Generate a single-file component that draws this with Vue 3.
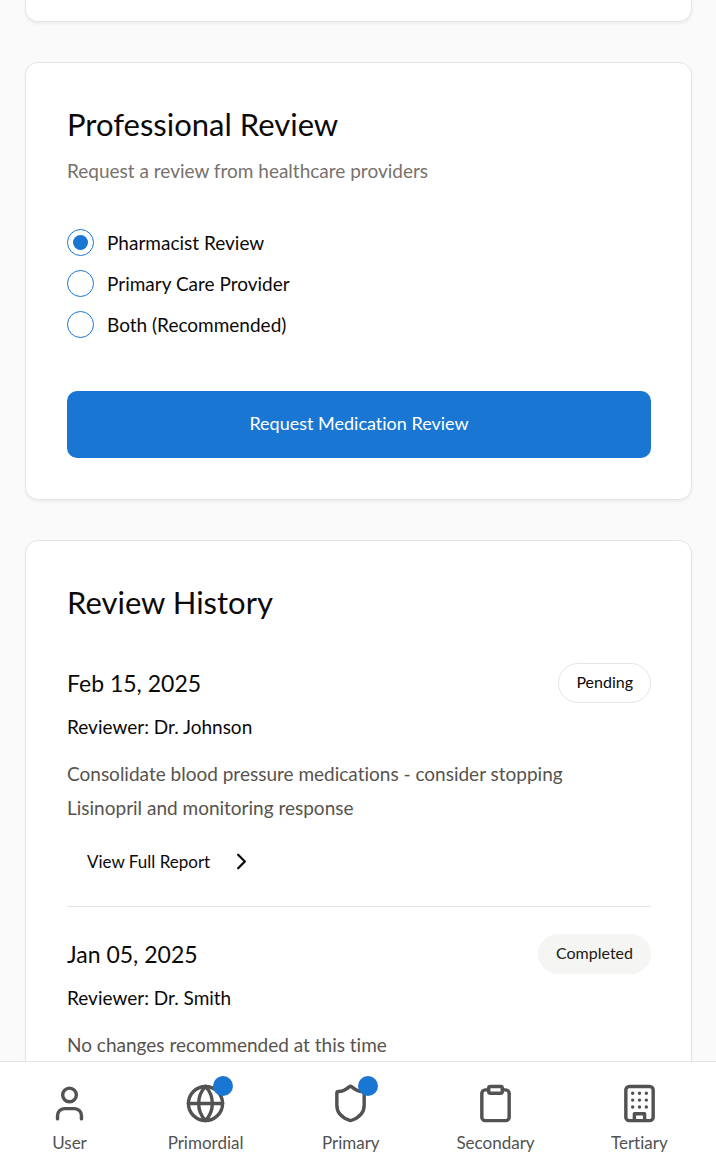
<script setup>
import { ref } from 'vue'

const reviewer = ref('pharmacist')

const options = [
  { value: 'pharmacist', label: 'Pharmacist Review' },
  { value: 'primary', label: 'Primary Care Provider' },
  { value: 'both', label: 'Both (Recommended)' },
]

const history = [
  {
    date: 'Feb 15, 2025',
    status: 'Pending',
    reviewer: 'Dr. Johnson',
    note: 'Consolidate blood pressure medications - consider stopping Lisinopril and monitoring response',
    hasReport: true,
  },
  {
    date: 'Jan 05, 2025',
    status: 'Completed',
    reviewer: 'Dr. Smith',
    note: 'No changes recommended at this time',
    hasReport: false,
  },
]

const tabs = [
  {
    label: 'User',
    paths: ['M19 21v-2a4 4 0 0 0-4-4H9a4 4 0 0 0-4 4v2', 'M8 7a4 4 0 1 0 8 0a4 4 0 1 0-8 0'],
  },
  {
    label: 'Primordial',
    alert: true,
    paths: [
      'M2 12a10 10 0 1 0 20 0a10 10 0 1 0-20 0',
      'M12 2a14.5 14.5 0 0 0 0 20 14.5 14.5 0 0 0 0-20',
      'M2 12h20',
    ],
  },
  {
    label: 'Primary',
    alert: true,
    paths: [
      'M20 13c0 5-3.5 7.5-7.66 8.95a1 1 0 0 1-.67-.01C7.5 20.5 4 18 4 13V6a1 1 0 0 1 1-1c2 0 4.5-1.2 6.24-2.72a1.17 1.17 0 0 1 1.52 0C14.51 3.81 17 5 19 5a1 1 0 0 1 1 1z',
    ],
  },
  {
    label: 'Secondary',
    paths: [
      'M9 2h6a1 1 0 0 1 1 1v2a1 1 0 0 1-1 1H9a1 1 0 0 1-1-1V3a1 1 0 0 1 1-1z',
      'M16 4h2a2 2 0 0 1 2 2v14a2 2 0 0 1-2 2H6a2 2 0 0 1-2-2V6a2 2 0 0 1 2-2h2',
    ],
  },
  {
    label: 'Tertiary',
    paths: [
      'M6 2h12a2 2 0 0 1 2 2v16a2 2 0 0 1-2 2H6a2 2 0 0 1-2-2V4a2 2 0 0 1 2-2z',
      'M9 22v-4h6v4',
      'M8 6h.01M12 6h.01M16 6h.01M8 10h.01M12 10h.01M16 10h.01M8 14h.01M12 14h.01M16 14h.01',
    ],
  },
]
</script>

<template>
  <div class="app">
    <main class="content">
      <section class="card card-tail" aria-hidden="true"></section>

      <section class="card">
        <h2 class="title">Professional Review</h2>
        <p class="subtitle">Request a review from healthcare providers</p>
        <div class="options" role="radiogroup" aria-label="Reviewer">
          <label v-for="o in options" :key="o.value" class="option">
            <input v-model="reviewer" class="radio" type="radio" name="reviewer" :value="o.value" />
            <span>{{ o.label }}</span>
          </label>
        </div>
        <button class="primary" type="button">Request Medication Review</button>
      </section>

      <section class="card">
        <h2 class="title">Review History</h2>
        <div class="history">
          <article v-for="h in history" :key="h.date" class="entry">
            <header class="entry-head">
              <h3 class="date">{{ h.date }}</h3>
              <span class="badge" :class="{ done: h.status === 'Completed' }">{{ h.status }}</span>
            </header>
            <p class="by">Reviewer: {{ h.reviewer }}</p>
            <p class="note">{{ h.note }}</p>
            <button v-if="h.hasReport" class="report" type="button">
              View Full Report
              <svg class="chevron" viewBox="0 0 24 24" aria-hidden="true"><path d="m9 18 6-6-6-6" /></svg>
            </button>
          </article>
        </div>
      </section>
    </main>

    <nav class="tabs" aria-label="Main">
      <a v-for="t in tabs" :key="t.label" class="tab" href="#">
        <span class="tab-icon">
          <svg viewBox="0 0 24 24" aria-hidden="true"><path v-for="d in t.paths" :key="d" :d="d" /></svg>
          <span v-if="t.alert" class="dot"></span>
        </span>
        <span class="tab-label">{{ t.label }}</span>
      </a>
    </nav>
  </div>
</template>

<style>
body {
  background: #fafafa;
}
</style>

<style scoped>
.app {
  display: flex;
  flex-direction: column;
  height: 100vh;
  font-family: Lato, "Liberation Sans", Arial, sans-serif;
  font-size: 19px;
  font-variant-ligatures: none;
  line-height: 34px;
  color: #0c0a09;
}
h2,
h3,
p {
  margin: 0;
  font-weight: 400;
}
button {
  font: inherit;
  color: inherit;
  border: 0;
  background: none;
  cursor: pointer;
}
svg {
  display: block;
  fill: none;
  stroke: currentColor;
  stroke-width: 2;
  stroke-linecap: round;
  stroke-linejoin: round;
}
.content {
  flex: 1;
  min-height: 0;
  overflow: hidden;
  padding: 0 24px 0 25px;
}
.card {
  margin-bottom: 40px;
  padding: 41px 40px 41px 41px;
  background: #fff;
  border: 1px solid #e5e5e5;
  border-radius: 13px;
  box-shadow: 0 2px 3px rgba(0, 0, 0, 0.05);
}
.card-tail {
  padding: 21px 0 0;
  border-top: 0;
  border-radius: 0 0 13px 13px;
}
.title {
  font-size: 31px;
  line-height: 40px;
}
.subtitle {
  margin-top: 10px;
  color: #78716c;
}
.options {
  display: flex;
  flex-direction: column;
  gap: 14px;
  margin: 41px 0 53px;
}
.option {
  display: flex;
  align-items: center;
  gap: 13px;
  line-height: 27px;
}
.radio {
  appearance: none;
  display: grid;
  place-items: center;
  width: 27px;
  height: 27px;
  margin: 0;
  border: 1px solid #1976d2;
  border-radius: 50%;
}
.radio:checked::before {
  content: "";
  width: 15px;
  height: 15px;
  border-radius: 50%;
  background: #1976d2;
}
.primary {
  display: block;
  width: 100%;
  padding: 15px 16px 17px;
  font-size: 18px;
  line-height: 35px;
  color: #fff;
  background: #1976d2;
  border-radius: 10px;
}
.entry {
  padding: 27px 0 21px;
  border-bottom: 1px solid #e5e5e5;
}
.entry:first-child {
  padding-top: 41px;
}
.entry:last-child {
  border-bottom: 0;
}
.entry-head {
  display: flex;
  align-items: center;
  justify-content: space-between;
}
.date {
  font-size: 23px;
}
.badge {
  padding: 3px 17px 5px;
  font-size: 16px;
  line-height: 30px;
  border: 1px solid #e7e5e4;
  border-radius: 20px;
}
.badge.done {
  color: #1c1917;
  background: #f5f5f4;
  border-color: #f5f5f4;
}
.by {
  margin-top: 7px;
}
.note {
  margin-top: 13px;
  padding-right: 20px;
  color: #57534e;
}
.report {
  display: flex;
  align-items: center;
  gap: 18px;
  margin-top: 13px;
  padding: 6px 20px;
  font-size: 17px;
  line-height: 35px;
}
.chevron {
  width: 27px;
  height: 27px;
}
.tabs {
  display: grid;
  grid-template-columns: 41fr 80fr 60fr 75fr 58fr;
  column-gap: 76px;
  padding: 21px 48px 16px 49px;
  background: #fff;
  border-top: 1px solid #e5e5e5;
}
.tab {
  display: flex;
  flex-direction: column;
  align-items: center;
  gap: 5px;
  font-size: 17px;
  line-height: 27px;
  color: #525252;
  text-decoration: none;
}
.tab-icon {
  position: relative;
  width: 41px;
  height: 41px;
}
.dot {
  position: absolute;
  top: -7px;
  right: -7px;
  width: 20px;
  height: 20px;
  border-radius: 50%;
  background: #1976d2;
}
</style>
